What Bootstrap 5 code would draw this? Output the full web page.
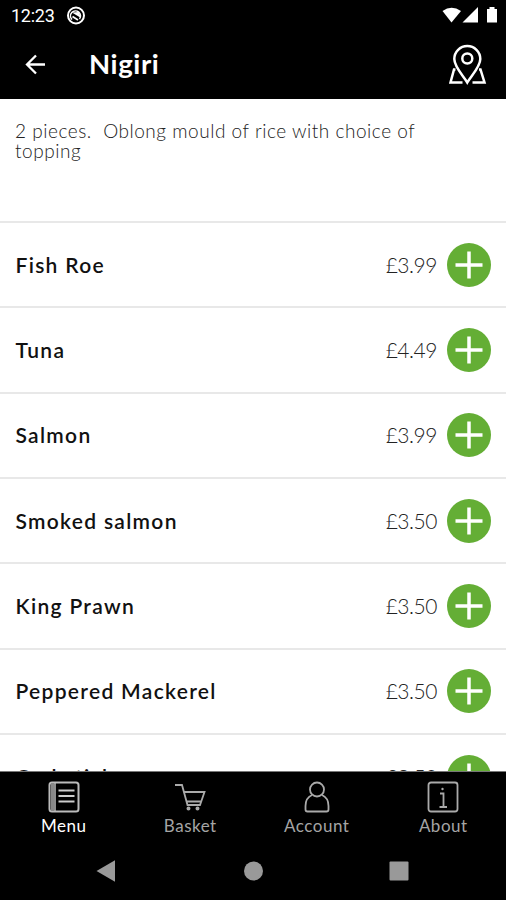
<!DOCTYPE html>
<html lang="en">
<head>
<meta charset="utf-8">
<meta name="viewport" content="width=device-width, initial-scale=1">
<title>Nigiri</title>
<link rel="stylesheet" href="https://cdn.jsdelivr.net/npm/bootstrap@5.3.0/dist/css/bootstrap.min.css">
<style>
  body { font-family: Lato, "Open Sans", sans-serif; color: #111; background: #fff; }
  svg { display: block; flex: none; }
  .screen { width: 506px; height: 900px; }
  .status { height: 32px; padding: 0 6px 0 11px; }
  .clock { font: 400 18px/32px Roboto, sans-serif; letter-spacing: -.25px; width: 54px; }
  .titlebar { height: 67px; padding: 0 18px 3px 24px; }
  .titlebar h1 { font-size: 27.5px; font-weight: 700; line-height: 32px; letter-spacing: .6px; margin-left: 43px; }
  .intro { height: 122px; padding: 22px 60px 0 15px; font-size: 19px; font-weight: 300; line-height: 20px; letter-spacing: .53px; color: #222; white-space: pre-wrap; }
  .dish { height: 85.35px; padding: 0 15px 0 15.5px; border-top: 2px solid #e8e8e8; }
  .dish-name { font-size: 21px; font-weight: 600; line-height: 26px; letter-spacing: 1.3px; }
  .price { font-size: 21px; font-weight: 300; line-height: 26px; letter-spacing: -.45px; margin-right: 10px; color: #222; }
  .add { width: 44px; height: 44px; background: #64ae35; }
  .tabs { height: 71px; border-top: 1px solid #777; }
  .tab { width: 126.5px; padding: 9px 0 0 1px; font-size: 17px; line-height: 20px; letter-spacing: .5px; color: #a5a5a5; }
  .tab span { margin-top: 3px; }
  .sysnav { height: 58px; }
</style>
<script src="https://cdn.jsdelivr.net/npm/bootstrap@5.3.0/dist/js/bootstrap.bundle.min.js"></script>
</head>
<body>
<div class="screen d-flex flex-column overflow-hidden">
  <header class="bg-black text-white flex-shrink-0">
    <div class="status d-flex align-items-center">
      <span class="clock">12:23</span>
      <svg width="22" height="22" viewBox="0 0 22 22" fill="none" stroke="#fff"><circle cx="11" cy="10.500" r="8" stroke-width="2"/><path d="M7 14.500A5 5 0 1 1 14.500 14" stroke-width="1.500"/><path d="M7 7.500l7-.5 2 6z" fill="#fff" stroke="none"/><path d="M7.500 11.500l5.500 3.500" stroke-width="1.800"/></svg>
      <svg class="ms-auto" width="64" height="24" viewBox="0 0 64 24" fill="#fff"><path d="M6.500 7Q15.500 .5 25 7L15.500 18.500z"/><path d="M42 3V18.500H26.500z"/><path d="M51 5h2.500V3h5v2H61v13.500H51z"/></svg>
    </div>
    <div class="titlebar d-flex align-items-center">
      <svg width="22" height="22" viewBox="0 0 22 22" fill="none" stroke="#fff" stroke-width="2.300"><path d="M21 11.500H3M12 2.500l-9 9 9 9"/></svg>
      <h1 class="mb-0">Nigiri</h1>
      <svg class="ms-auto" width="40" height="42" viewBox="0 0 40 42" fill="none" stroke="#fff" stroke-width="2.500"><path d="M19.300 39.500C15.500 33 6.300 24 6.300 16a13 13 0 0 1 26 0C32.300 24 23 33 19.300 39.500z"/><circle cx="19.300" cy="15.500" r="5"/><path d="M7.500 26.500H6L2.500 39.500h12M31 26.500h1.500L36.500 39.500H24.500"/></svg>
    </div>
  </header>
  <main class="flex-grow-1 overflow-hidden">
    <p class="intro mb-0">2 pieces.  Oblong mould of rice with choice of topping</p>
    <div id="dishes"></div>
  </main>
  <nav class="tabs bg-black d-flex flex-shrink-0 text-center">
    <div class="tab text-white d-flex flex-column align-items-center">
      <svg width="32" height="32" viewBox="0 0 32 32" fill="none" stroke="#bbb" stroke-width="2"><rect x="1.500" y="1.500" width="29" height="29" rx="2.500"/><path d="M4.500 2v28" stroke="#888" stroke-width="3"/><path d="M7 2v28" stroke-width="1.500"/><path d="M10.500 9.500h16M10.500 15h16M10.500 20.500h16" stroke="#ccc" stroke-width="2.200"/></svg>
      <span>Menu</span>
    </div>
    <div class="tab d-flex flex-column align-items-center">
      <svg width="32" height="32" viewBox="0 0 32 32" fill="none" stroke="#aaa" stroke-width="1.800"><path d="M1 4h7l5.500 20h12.500L30.500 11H10M12 20.500h15"/><circle cx="14.500" cy="27.500" r="1.100" fill="#aaa"/><circle cx="23.500" cy="27.500" r="1.100" fill="#aaa"/></svg>
      <span>Basket</span>
    </div>
    <div class="tab d-flex flex-column align-items-center">
      <svg width="32" height="32" viewBox="0 0 32 32" fill="none" stroke="#aaa" stroke-width="1.800"><circle cx="16" cy="8.500" r="7"/><path d="M11 14C6.500 16 4.500 20 4.500 25v3.500q0 2 2 2h19q2 0 2-2V25c0-5-2-9-6.500-11"/></svg>
      <span>Account</span>
    </div>
    <div class="tab d-flex flex-column align-items-center">
      <svg width="32" height="32" viewBox="0 0 32 32" fill="none" stroke="#aaa" stroke-width="1.800"><rect x="1.500" y="1.500" width="29" height="29" rx="2.500"/><path d="M13 12.500h3.500V26M12.500 26h7.500"/><circle cx="15.500" cy="8" r="1.200" fill="#aaa" stroke="none"/></svg>
      <span>About</span>
    </div>
  </nav>
  <footer class="sysnav bg-black flex-shrink-0">
    <svg width="506" height="58" viewBox="0 842 506 58" fill="#999"><path d="M96.500 871l18.500-10.700v21.400z"/><circle cx="253.500" cy="871" r="9.500"/><rect x="389.500" y="861.500" width="19" height="19" rx="1"/></svg>
  </footer>
</div>
<script>
  const dishes = [["Fish Roe", "3.99"], ["Tuna", "4.49"], ["Salmon", "3.99"], ["Smoked salmon", "3.50"], ["King Prawn", "3.50"], ["Peppered Mackerel", "3.50"], ["Crabstick", "3.50"]];
  document.getElementById("dishes").innerHTML = dishes.map(([name, price]) => `
    <div class="dish d-flex align-items-center">
      <span class="dish-name me-auto">${name}</span>
      <span class="price">£${price}</span>
      <button class="add btn rounded-circle p-0 border-0 d-flex align-items-center justify-content-center" aria-label="Add ${name}">
        <svg width="28" height="28" viewBox="0 0 28 28" stroke="#fff" stroke-width="3.500"><path d="M14 .5v27M.5 14h27"/></svg>
      </button>
    </div>`).join("");
</script>
</body>
</html>
